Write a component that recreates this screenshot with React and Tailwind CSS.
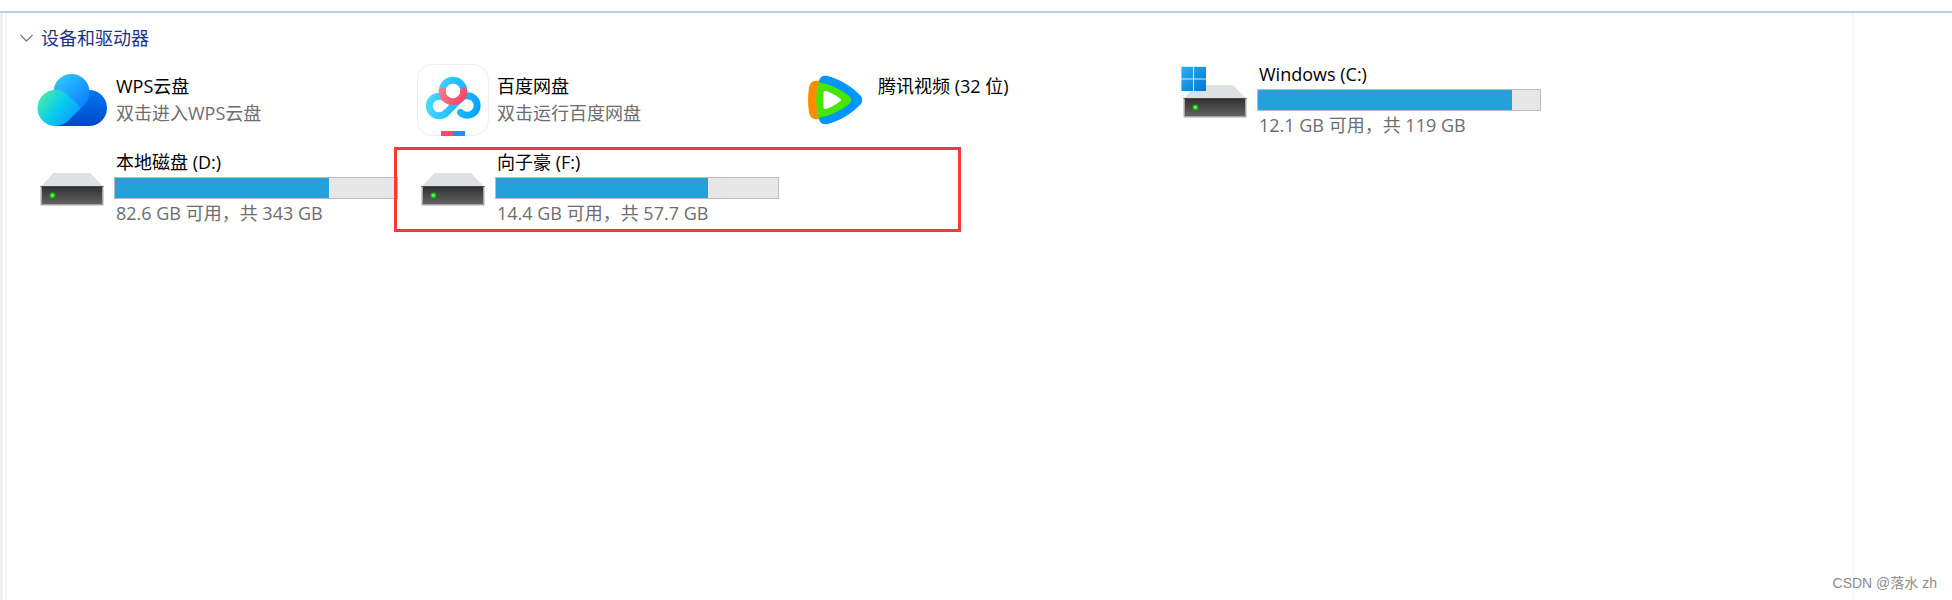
import React, { useState } from 'react';

const DRIVES = [
  { id: 'wps', name: 'WPS云盘', note: '双击进入WPS云盘', Icon: WpsIcon },
  { id: 'baidu', name: '百度网盘', note: '双击运行百度网盘', Icon: BaiduIcon },
  { id: 'tencent', name: '腾讯视频 (32 位)', note: '', Icon: TencentIcon },
  { id: 'c', name: 'Windows (C:)', note: '12.1 GB 可用，共 119 GB', used: 90, Icon: SystemDriveIcon },
  { id: 'd', name: '本地磁盘 (D:)', note: '82.6 GB 可用，共 343 GB', used: 76, Icon: DriveIcon },
  { id: 'f', name: '向子豪 (F:)', note: '14.4 GB 可用，共 57.7 GB', used: 75, marked: true, Icon: DriveIcon },
];

function WpsIcon() {
  return (
    <svg viewBox="0 0 72 72" className="size-[72px] shrink-0" aria-hidden="true">
      <defs>
        <linearGradient id="wpsTop" x1="0" y1="0" x2="1" y2="1">
          <stop offset="0.1" stopColor="#30c8ff" />
          <stop offset="0.9" stopColor="#0a80ff" />
        </linearGradient>
        <linearGradient id="wpsRight" x1="0" y1="0" x2="0" y2="1">
          <stop offset="0" stopColor="#0078f0" />
          <stop offset="1" stopColor="#0048c8" />
        </linearGradient>
        <linearGradient id="wpsLeft" x1="0" y1="0.2" x2="0.9" y2="0.8">
          <stop offset="0.1" stopColor="#3ce6b4" />
          <stop offset="0.5" stopColor="#08cdf0" />
          <stop offset="1" stopColor="#0a9cff" />
        </linearGradient>
      </defs>
      <path d="M19 62 L45 26 H53 A18 18 0 0 1 53 62 Z" fill="url(#wpsRight)" />
      <path d="M17.5 28 A18 18 0 0 1 53.5 28 C53.5 35 50 40 45 44 L32 36 Z" fill="url(#wpsTop)" />
      <path d="M32.2 31.3 L45 44 L32.2 56.7 A18 18 0 1 1 32.2 31.3 Z" fill="url(#wpsLeft)" />
    </svg>
  );
}

function BaiduIcon() {
  return (
    <svg viewBox="0 0 72 72" className="size-[72px] shrink-0" fill="none" aria-hidden="true">
      <defs>
        <linearGradient id="bdBlue" gradientUnits="userSpaceOnUse" x1="9" y1="30" x2="63" y2="42">
          <stop offset="0" stopColor="#4adcff" />
          <stop offset="1" stopColor="#06a2ff" />
        </linearGradient>
        <linearGradient id="bdRed" gradientUnits="userSpaceOnUse" x1="22" y1="24" x2="46" y2="40">
          <stop offset="0" stopColor="#ff7d8c" />
          <stop offset="1" stopColor="#ff4169" />
        </linearGradient>
      </defs>
      <rect x="0.5" y="0.5" width="71" height="71" rx="15" fill="#fff" stroke="#eeeeee" />
      <g stroke="url(#bdBlue)" strokeWidth="7" strokeLinecap="round">
        <path d="M29 49 A9.8 9.8 0 1 1 29 35" />
        <path d="M29 49 L43 35 A9.8 9.8 0 1 1 43.5 48.5" />
        <circle cx="36" cy="27" r="10.7" />
      </g>
      {/* lower half of the top ring */}
      <path d="M25.3 27 A10.7 10.7 0 0 0 46.7 27" stroke="url(#bdRed)" strokeWidth="7" strokeLinecap="round" />
      <circle cx="36" cy="27" r="7.2" fill="#fff" />
      <path d="M24 67 h12 v5 h-12z" fill="#ff466c" />
      <path d="M36 67 h12 v5 h-12z" fill="#1e90ff" />
    </svg>
  );
}

function TencentIcon() {
  return (
    <svg viewBox="0 0 72 72" className="size-[72px] shrink-0" aria-hidden="true">
      <path d="M22 17 C15 16 12 18 11 24 C9.7 32 9.7 40 11 48 C12 54 15 56 22 55 Z" fill="#ff8c00" />
      <path
        d="M21 17 C22 12.5 25 11 30 12 C42 15.5 54 22.5 62 31 C65 34.5 65 37.5 62 41 C54 49.5 42 56.5 30 60 C25 61 22 59.5 21 55 Z"
        fill="#0096ff"
      />
      <path
        d="M20.5 18 C31 20 43 25 51.5 32.5 C54 35 54 37 51.5 39.5 C43 47 31 52 20.5 54 C17.5 43 17.5 29 20.5 18 Z"
        fill="#46e600"
      />
      <path
        d="M25.5 29 C25.5 27 27 26.5 29 27.3 C34 29.3 38 31.5 42 34.5 C43.3 35.5 43.3 36.5 42 37.5 C38 40.5 34 42.7 29 44.7 C27 45.5 25.5 45 25.5 43 Z"
        fill="#fff"
      />
    </svg>
  );
}

function DriveShape() {
  return (
    <>
      <defs>
        <linearGradient id="driveFace" x1="0" y1="0" x2="0" y2="1">
          <stop offset="0" stopColor="#303030" />
          <stop offset="1" stopColor="#626262" />
        </linearGradient>
      </defs>
      <path d="M17.5 21 H54 L67 34.5 H5 Z" fill="#dfe0e4" />
      <rect x="4.5" y="34" width="63" height="19.5" rx="1" fill="#a6a6a6" />
      <rect x="6" y="34.5" width="60" height="17.5" fill="url(#driveFace)" />
      <path d="M4.5 34.5 H67.5" stroke="#4a4a4a" />
      <circle cx="16.5" cy="43.5" r="3" fill="#14b414" />
      <circle cx="16.3" cy="43.3" r="1.6" fill="#5aff50" />
    </>
  );
}

function DriveIcon() {
  return (
    <svg viewBox="0 0 72 72" className="size-[72px] shrink-0" aria-hidden="true">
      <DriveShape />
    </svg>
  );
}

function SystemDriveIcon() {
  return (
    <svg viewBox="0 0 72 72" className="size-[72px] shrink-0" aria-hidden="true">
      <DriveShape />
      <defs>
        <linearGradient id="winLogo" gradientUnits="userSpaceOnUse" x1="2" y1="2" x2="27" y2="27">
          <stop offset="0" stopColor="#2cb0ec" />
          <stop offset="1" stopColor="#0278d4" />
        </linearGradient>
      </defs>
      <rect x="2" y="2" width="25" height="25" fill="#d4ecfa" />
      <path d="M2.5 3 h11.5 v11.5 h-11.5z M15 3 h12 v11.5 h-12z M2.5 15.5 h11.5 v11.5 h-11.5z M15 15.5 h12 v11.5 h-12z" fill="url(#winLogo)" />
    </svg>
  );
}

function DriveTile({ drive }) {
  const { name, note, used, marked, Icon } = drive;

  return (
    <li className="relative flex h-[72px] gap-1.5">
      <Icon />
      {used !== undefined ? (
        <div className="w-[284px]">
          <div className="px-0.5 leading-5 text-black">{name}</div>
          <div
            role="progressbar"
            aria-label={name}
            aria-valuenow={used}
            className="mt-[5px] mb-[3px] h-[22px] border border-[#bcbcbc] bg-[#e6e6e6]"
          >
            <div className="h-full bg-[#26a0da]" style={{ width: `${used}%` }} />
          </div>
          <div className="px-0.5 leading-[22px] text-[#6d6d6d]">{note}</div>
        </div>
      ) : (
        <div className="px-0.5 py-[9px] leading-[27px]">
          <div className="text-black">{name}</div>
          <div className="text-[#6d6d6d]">{note}</div>
        </div>
      )}

      {/* red callout around the drive */}
      {marked && (
        <div className="pointer-events-none absolute -top-[5px] -left-[23px] h-[85px] w-[567px] border-3 border-[#ff3737]" />
      )}
    </li>
  );
}

export default function App() {
  const [open, setOpen] = useState(true);

  return (
    <div className="relative flex min-h-screen flex-col bg-white pt-[11px] font-['Open_Sans','Noto_Sans_CJK_SC',sans-serif] text-lg">
      <div className="flex flex-1 border-t-2 border-[#bccddb]">
        <div className="w-[3px] bg-[#f0f0f0]" />
        <div className="ml-0.5 w-0.5 bg-[#f7f7f7]" />

        <main className="flex-1 pt-3">
          <button
            type="button"
            aria-expanded={open}
            onClick={() => setOpen(!open)}
            className="flex items-center gap-[7px] pl-3 leading-[27px] text-[#1e3287]"
          >
            <svg viewBox="0 0 15 15" className="size-[15px]" fill="none" stroke="#808080" aria-hidden="true">
              <path d="M1.5 4 L7.5 10 L13.5 4" strokeWidth="1.4" />
            </svg>
            <span>设备和驱动器</span>
          </button>

          {open && (
            <ul className="mt-3 grid grid-cols-[repeat(auto-fill,381px)] gap-y-4 pl-[29px]">
              {DRIVES.map((drive) => (
                <DriveTile key={drive.id} drive={drive} />
              ))}
            </ul>
          )}
        </main>

        <aside className="w-[100px] border-l-2 border-[#f7f7f7]" />
      </div>

      <div className="absolute right-[15px] bottom-[7px] font-['Liberation_Sans','Noto_Sans_CJK_SC',sans-serif] text-sm text-[#8c8c8c]">
        CSDN @落水 zh
      </div>
    </div>
  );
}
